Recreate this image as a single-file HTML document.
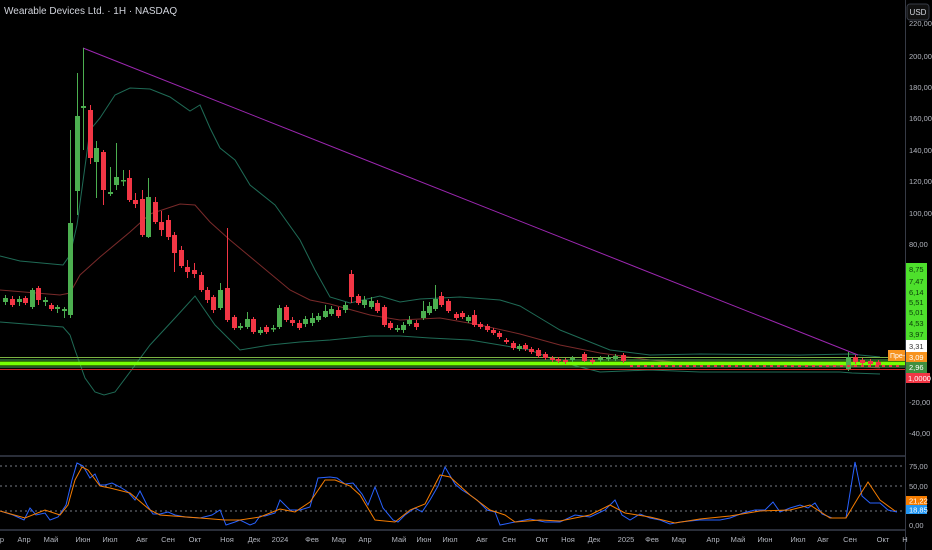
<!DOCTYPE html>
<html><head><meta charset="utf-8">
<style>
html,body{margin:0;padding:0;background:#000;width:932px;height:550px;overflow:hidden}
svg{display:block}
text{font-family:"Liberation Sans","DejaVu Sans",sans-serif}
</style></head><body>
<svg id="s" width="932" height="550" viewBox="0 0 932 550" xmlns="http://www.w3.org/2000/svg">
<rect width="932" height="550" fill="#000"/>
<text x="4" y="14" fill="#d1d4dc" font-size="10">Wearable Devices Ltd. · 1H · NASDAQ</text>
<!-- right axis line -->
<line x1="905.5" y1="0" x2="905.5" y2="550" stroke="#363a45"/>
<rect x="907" y="4" width="22" height="16" rx="3" fill="#111" stroke="#363a45"/>
<text x="918" y="15" fill="#d1d4dc" font-size="8" text-anchor="middle">USD</text>
<g fill="#b2b5be" font-size="7.5">
<text x="909" y="26">220,00</text>
<text x="909" y="59">200,00</text>
<text x="909" y="90">180,00</text>
<text x="909" y="121">160,00</text>
<text x="909" y="153">140,00</text>
<text x="909" y="184">120,00</text>
<text x="909" y="216">100,00</text>
<text x="909" y="247">80,00</text>
<text x="909" y="405">-20,00</text>
<text x="909" y="436">-40,00</text>
</g>
<!-- panel divider -->
<line x1="0" y1="456" x2="905" y2="456" stroke="#2a2e39" stroke-width="2"/>
<line x1="0" y1="530" x2="905" y2="530" stroke="#2a2e39" stroke-width="2"/>
<!-- osc dotted -->
<g stroke="#787b86" stroke-dasharray="2,3" stroke-width="1">
<line x1="0" y1="466" x2="905" y2="466"/>
<line x1="0" y1="486" x2="905" y2="486"/>
<line x1="0" y1="511" x2="905" y2="511"/>
</g>
<!-- bollinger -->
<g fill="none" stroke-width="1">
<polyline stroke="#1f6b56" points="0,256 20,261 63,265 70,255 77,225 90,130 100,118 115,95 130,88 150,89 170,97 190,111 195,108 200,105 210,128 220,148 235,160 250,185 275,205 300,240 315,270 330,297 350,303 380,296 400,302 420,299 460,297 500,300 520,306 540,318 560,330 610,350 650,355 700,354 800,355 850,354 880,357"/>
<polyline stroke="#7a2a2a" points="0,290 60,295 70,293 80,275 100,257 130,232 150,214 180,204 195,205 210,222 230,240 260,265 290,290 310,300 330,304 370,315 400,320 440,318 480,325 520,334 560,345 600,353 650,360 700,364 850,366 880,368"/>
<polyline stroke="#1f6b56" points="0,322 63,327 70,335 75,350 85,378 95,392 104,395 115,392 130,372 150,345 175,318 195,296 215,325 240,350 270,345 300,342 330,340 370,336 400,336 430,338 470,340 500,345 530,350 560,362 600,372 650,370 700,372 840,372 852,373 880,374"/>
</g>
<!-- horizontal levels -->
<g>
<line x1="0" y1="357.5" x2="905" y2="357.5" stroke="#7cb342" stroke-width="1"/>
<line x1="0" y1="360" x2="905" y2="360" stroke="#4caf50" stroke-width="1"/>
<rect x="0" y="361.5" width="905" height="4" fill="#76ff03"/>
<line x1="0" y1="367" x2="905" y2="367" stroke="#4caf50" stroke-width="1"/>
<line x1="0" y1="369.5" x2="905" y2="369.5" stroke="#c62828" stroke-width="1"/>
</g>
<!-- purple trendline -->
<line x1="83" y1="48" x2="858" y2="355" stroke="#9c27b0" stroke-width="1"/>
<g id="candles"></g>
<!-- dotted red small candles on the right -->
<line x1="630" y1="366" x2="900" y2="366" stroke="#f23645" stroke-width="2" stroke-dasharray="3,4"/>
<!-- osc lines -->
<polyline fill="none" stroke="#2962ff" stroke-width="1" points="0,511 13,515 24,520 30,508 36,515 45,513 50,520 58,517 66,505 72,480 77,463 83,466 90,478 95,474 100,485 105,485 112,483 120,487 128,492 135,500 140,491 147,505 153,514 160,514 168,512 175,515 185,517 200,518 212,515 220,510 226,525 235,522 240,520 250,525 255,523 260,516 265,516 275,513 280,500 290,510 300,510 310,507 318,478 330,477 337,478 345,484 353,483 362,494 368,505 375,487 383,508 393,520 398,522 405,515 415,508 422,512 430,500 438,486 445,467 455,484 462,490 470,495 477,500 487,510 495,512 500,525 515,522 530,519 545,522 560,522 575,515 590,517 605,510 615,500 622,515 630,520 640,514 650,518 660,520 670,524 680,522 700,520 720,520 730,518 743,513 755,510 765,510 773,502 780,512 790,508 800,505 808,508 815,503 822,514 832,518 846,518 855,462 862,496 870,503 880,503 888,510 897,512"/>
<polyline fill="none" stroke="#f57c00" stroke-width="1" points="0,511 25,518 45,510 60,515 68,505 75,480 82,467 88,470 100,486 110,488 130,493 150,510 160,515 200,518 225,520 240,520 260,517 280,509 295,512 310,502 325,480 335,480 350,486 360,495 375,520 395,522 410,510 425,504 440,475 450,477 470,495 490,510 505,515 515,522 540,520 560,521 590,515 610,505 625,513 650,517 675,523 700,519 730,516 760,511 790,510 810,505 830,518 846,518 858,498 868,482 880,500 895,511"/>
<g fill="#b2b5be" font-size="7.5">
<text x="909" y="469">75,00</text>
<text x="909" y="489">50,00</text>
<text x="909" y="528">0,00</text>
</g>
<rect x="906" y="496" width="21" height="9" fill="#f57c00"/>
<text x="909" y="503.5" fill="#fff" font-size="7.5">21,22</text>
<rect x="906" y="505" width="21" height="9" fill="#2196f3"/>
<text x="909" y="512.5" fill="#fff" font-size="7.5">18,85</text>
<!-- price labels -->
<rect x="906" y="263" width="21" height="77" fill="#4ee02c"/>
<g fill="#0a3a0a" font-size="7.5">
<text x="909" y="272">8,75</text><text x="909" y="284">7,47</text><text x="909" y="295">6,14</text><text x="909" y="305">5,51</text><text x="909" y="315">5,01</text><text x="909" y="326">4,53</text><text x="909" y="337">3,97</text>
</g>
<rect x="906" y="340" width="21" height="12" fill="#fff"/>
<text x="909" y="349" fill="#333" font-size="7.5">3,31</text>
<rect x="888" y="350" width="17" height="11" fill="#f7931e"/>
<text x="890" y="358" fill="#fff" font-size="7">Пре-</text>
<rect x="906" y="352" width="21" height="10" fill="#f7931e"/>
<text x="909" y="360" fill="#fff" font-size="7.5">3,09</text>
<rect x="906" y="362" width="21" height="11" fill="#3f8f3f"/>
<text x="909" y="370" fill="#fff" font-size="7.5">2,96</text>
<rect x="906" y="373" width="24" height="10" fill="#f23645"/>
<text x="908" y="381" fill="#fff" font-size="7.5">1,0000</text>
<!-- dates -->
<g fill="#b2b5be" font-size="7.5" text-anchor="middle">
<text x="2" y="542">р</text><text x="24" y="542">Апр</text><text x="51" y="542">Май</text><text x="83" y="542">Июн</text><text x="110" y="542">Июл</text><text x="142" y="542">Авг</text><text x="168" y="542">Сен</text><text x="195" y="542">Окт</text><text x="227" y="542">Ноя</text><text x="254" y="542">Дек</text><text x="280" y="542">2024</text><text x="312" y="542">Фев</text><text x="339" y="542">Мар</text><text x="365" y="542">Апр</text><text x="399" y="542">Май</text><text x="424" y="542">Июн</text><text x="450" y="542">Июл</text><text x="482" y="542">Авг</text><text x="509" y="542">Сен</text><text x="542" y="542">Окт</text><text x="568" y="542">Ноя</text><text x="594" y="542">Дек</text><text x="626" y="542">2025</text><text x="652" y="542">Фев</text><text x="679" y="542">Мар</text><text x="713" y="542">Апр</text><text x="738" y="542">Май</text><text x="765" y="542">Июн</text><text x="798" y="542">Июл</text><text x="823" y="542">Авг</text><text x="850" y="542">Сен</text><text x="883" y="542">Окт</text><text x="905" y="542">Н</text>
</g>
</svg>
<script>
var c=[
[5,'g',298,302,295,305],[12,'r',299,305,296,307],[19,'g',299,302,296,306],[25,'r',298,303,296,305],
[32,'g',290,307,288,309],[38,'r',288,300,286,305],[45,'g',300,302,297,306],[51,'r',305,309,303,311],
[57,'g',307,309,305,313],[64,'g',309,311,307,318],[70,'g',223,315,130,318],[77,'g',116,191,73,215],
[83,'g',106,108,48,150],[90,'r',110,158,105,164],[96,'g',148,162,141,198],[103,'r',152,190,150,205],
[110,'g',192,194,167,196],[116,'g',177,185,143,190],[123,'g',180,181,170,186],[129,'r',178,200,170,202],
[135,'r',200,204,193,208],[142,'r',199,235,190,237],[148,'g',197,237,178,238],[155,'r',202,222,197,224],
[161,'r',222,230,211,236],[168,'r',220,237,215,240],[174,'r',235,253,232,272],[181,'r',250,266,246,268],
[187,'r',267,272,260,278],[194,'r',270,274,263,278],[201,'r',275,290,272,292],[207,'r',290,300,287,303],
[213,'r',297,310,295,313],[220,'g',290,308,283,310],[227,'r',288,320,228,322],[234,'r',317,328,315,330],
[240,'g',326,328,323,330],[247,'g',319,327,312,329],[253,'r',319,332,317,334],[260,'g',330,333,327,335],
[266,'r',327,332,325,334],[273,'g',328,329,325,332],[279,'g',308,327,305,329],[286,'r',307,320,305,322],
[292,'r',320,323,317,326],[299,'r',323,328,320,330],[305,'g',319,324,316,327],[312,'g',318,323,313,326],
[318,'g',316,320,313,322],[325,'g',311,317,305,318],[331,'g',309,314,306,316],[338,'r',310,316,307,318],
[345,'g',305,310,302,313],[351,'r',274,297,270,303],[358,'r',296,303,294,305],[364,'g',300,305,296,308],
[371,'g',301,307,297,309],[377,'r',303,311,300,313],[384,'r',307,325,305,327],[390,'r',323,328,321,330],
[397,'g',328,330,325,332],[403,'g',325,330,322,333],[409,'g',320,324,316,326],[416,'r',323,327,320,330],
[423,'g',311,318,301,320],[429,'g',306,313,302,315],[435,'g',299,309,285,311],[441,'r',296,305,292,307],
[448,'r',301,311,299,313],[456,'r',314,318,312,320],[462,'r',313,317,311,319],[468,'g',317,321,315,323],
[474,'r',315,325,310,327],[480,'r',324,327,322,329],[487,'r',326,330,324,332],[493,'r',330,333,328,335],
[499,'r',333,337,331,339],[506,'r',340,342,338,344],[513,'r',343,348,341,350],[519,'g',346,349,344,351],
[525,'r',345,349,343,351],[531,'r',349,352,347,354],[538,'r',350,356,348,358],[545,'r',354,358,352,360],
[552,'r',358,360,356,362],[558,'r',359,361,357,363],[565,'r',360,362,358,364],[572,'g',358,360,356,362],
[584,'r',354,361,352,362],[592,'r',360,362,358,364],[600,'g',358,360,356,362],[608,'g',357,359,355,361],
[615,'g',356,359,354,361],[623,'r',355,361,353,363],[848,'g',357,369,352,371],[855,'r',357,362,355,364],
[862,'r',360,363,358,365],[870,'r',361,364,359,366],[878,'r',362,365,360,367]
];
var g=document.getElementById('candles'),h='';
c.forEach(function(d){var col=d[1]=='g'?'#4caf50':'#f23645';
h+='<line x1="'+(d[0]+0.5)+'" y1="'+d[4]+'" x2="'+(d[0]+0.5)+'" y2="'+d[5]+'" stroke="'+col+'" stroke-width="1"/>';
h+='<rect x="'+(d[0]-2)+'" y="'+d[2]+'" width="5" height="'+Math.max(1.5,d[3]-d[2])+'" fill="'+col+'"/>';});
g.innerHTML=h;
</script>
</body></html>
